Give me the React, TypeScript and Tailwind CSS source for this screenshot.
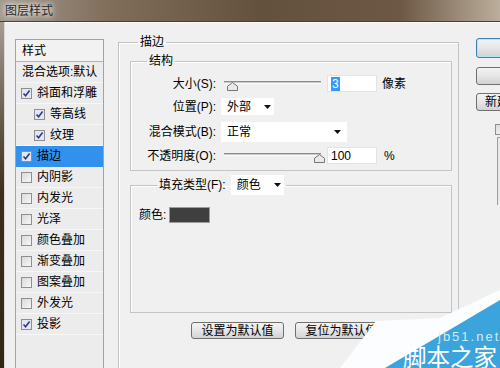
import React from "react";

type Item = { label: string; box?: boolean; on?: boolean; indent?: boolean; sel?: boolean };

const items: Item[] = [
  { label: "混合选项:默认" },
  { label: "斜面和浮雕", box: true, on: true },
  { label: "等高线", box: true, on: true, indent: true },
  { label: "纹理", box: true, on: true, indent: true },
  { label: "描边", box: true, on: true, sel: true },
  { label: "内阴影", box: true },
  { label: "内发光", box: true },
  { label: "光泽", box: true },
  { label: "颜色叠加", box: true },
  { label: "渐变叠加", box: true },
  { label: "图案叠加", box: true },
  { label: "外发光", box: true },
  { label: "投影", box: true, on: true },
];

function Check({ on }: { on?: boolean }) {
  return (
    <span
      className={`flex h-[11px] w-[11px] shrink-0 items-center justify-center border border-[#8e8f8f] ${
        on ? "bg-[#e6e6f2]" : "bg-linear-to-br from-[#dadada] to-[#f7f7f7]"
      }`}
    >
      {on && (
        <svg width="9" height="9" viewBox="0 0 9 9">
          <path d="M1.5 4.5 L3.6 6.8 L7.6 1.6" fill="none" stroke="#2b3990" strokeWidth="1.6" />
        </svg>
      )}
    </span>
  );
}

function Arrow() {
  return (
    <svg width="7" height="4" viewBox="0 0 7 4">
      <path d="M0 0H7L3.5 4Z" fill="#111" />
    </svg>
  );
}

function Select({ text, className }: { text: string; className: string }) {
  return (
    <div className={`flex items-center justify-between bg-white pl-[6px] ${className}`}>
      <span>{text}</span>
      <Arrow />
    </div>
  );
}

function Slider({ thumb }: { thumb: string }) {
  return (
    <div className="relative ml-[8px] h-[17px] w-[97px] shrink-0">
      <div className="absolute left-0 right-0 top-[6px] h-[3px] border-t border-b border-t-[#8c8c8c] border-b-[#fafafa] bg-[#c9c9c9]" />
      <svg className={`absolute top-[7px] ${thumb}`} width="11" height="9" viewBox="0 0 11 9">
        <path d="M0.5 8.5V4.2L5.5 0.6L10.5 4.2V8.5Z" fill="#e9e9e9" stroke="#777" />
      </svg>
    </div>
  );
}

function Input({ children }: { children: React.ReactNode }) {
  return (
    <div className="ml-[6px] flex h-[17px] w-[50px] shrink-0 items-center border border-[#e3e3e3] bg-white pl-[3px]">
      {children}
    </div>
  );
}

function Label({ children }: { children: React.ReactNode }) {
  return <span className="w-[85px] shrink-0 text-right">{children}</span>;
}

function Btn({ children, className }: { children: React.ReactNode; className: string }) {
  return (
    <div
      className={`flex items-center whitespace-nowrap rounded-[3px] border bg-linear-to-b from-[#f3f3f3] via-[#e6e6e6] to-[#d2d2d2] text-[12px] ${className}`}
    >
      {children}
    </div>
  );
}

export default function App() {
  return (
    <div className="relative h-[368px] w-[500px] overflow-hidden font-['Liberation_Sans','Noto_Sans_CJK_SC',sans-serif] text-[12px] leading-none text-black">
      <div className="h-[22px] border-b border-[#4d3d2c] bg-[linear-gradient(90deg,#a39a90_0%,#806d5a_22%,#63503d_52%,#6c5845_80%,#bcae9c_100%)] pl-[5px] pt-[5px] text-[12px] text-[#2a2a2a] [text-shadow:0_0_5px_#fff,0_0_8px_#fff]">
        图层样式
      </div>

      <div className="flex h-[346px]">
        <div className="w-[5px] shrink-0 border-r border-[#d9d9d9] bg-linear-to-b from-[#a69c90] via-[#3d2d1c] to-[#342616]" />

        <div className="flex flex-1 items-start border-t border-[#fbfbfb] bg-[#f0f0f0] pl-[10px] pt-[12px]">
          <div className="mt-[4px] flex h-[340px] w-[89px] shrink-0 flex-col border border-[#a3a3a3] bg-[#ececec]">
            <div className="flex h-[22px] shrink-0 items-center border-b border-[#b2b2b2] bg-[#f2f2f2] pl-[6px]">样式</div>
            {items.map((it) => (
              <div
                key={it.label}
                className={`flex h-[21px] shrink-0 items-center gap-[5px] border-b ${
                  it.sel ? "border-[#3191ec] bg-[#3191ec]" : "border-[#f7f7f7]"
                } ${it.indent ? "pl-[18px]" : it.box ? "pl-[5px]" : "pl-[6px]"}`}
              >
                {it.box && <Check on={it.on} />}
                <span>{it.label}</span>
              </div>
            ))}
          </div>

          <fieldset className="ml-[14px] w-[341px] shrink-0 border border-[#c4c4c4] pb-[40px] shadow-[inset_1px_1px_0_#fff]">
            <legend className="ml-[19px] px-[2px] leading-[14px]">描边</legend>
            <div className="pl-[11px] pr-[6px]">
              <fieldset className="mt-[5px] border border-[#c4c4c4] shadow-[inset_1px_1px_0_#fff]">
                <legend className="ml-[16px] px-[2px] leading-[14px]">结构</legend>
                <div className="flex flex-col pb-[6px] pt-[7px]">
                  <div className="flex h-[17px] items-center">
                    <Label>大小(S):</Label>
                    <Slider thumb="left-[3px]" />
                    <Input>
                      <span className="bg-[#3399ff] px-[1px] py-[1px] text-white">3</span>
                    </Input>
                    <span className="ml-[5px]">像素</span>
                  </div>
                  <div className="mt-[6px] flex h-[17px] items-center">
                    <Label>位置(P):</Label>
                    <Select text="外部" className="ml-[5px] h-[17px] w-[53px] pr-[3px]" />
                  </div>
                  <div className="mt-[7px] flex h-[20px] items-center">
                    <Label>混合模式(B):</Label>
                    <Select text="正常" className="ml-[5px] h-[20px] w-[126px] pr-[6px]" />
                  </div>
                  <div className="mt-[5px] flex h-[17px] items-center">
                    <Label>不透明度(O):</Label>
                    <Slider thumb="left-[90px]" />
                    <Input>100</Input>
                    <span className="ml-[7px]">%</span>
                  </div>
                </div>
              </fieldset>

              <fieldset className="mt-[4px] border border-[#c4c4c4] shadow-[inset_1px_1px_0_#fff]">
                <legend className="ml-[26px] px-[2px]">
                  <div className="flex h-[20px] items-center">
                    <span>填充类型(F):</span>
                    <Select text="颜色" className="ml-[5px] h-[20px] w-[53px] pr-[3px]" />
                  </div>
                </legend>
                <div className="h-[117px] pl-[8px] pt-[12px]">
                  <div className="flex h-[16px] items-center">
                    <span>颜色:</span>
                    <span className="ml-[3px] h-[16px] w-[41px] border border-[#9c9c9c] bg-[#403f40]" />
                  </div>
                </div>
              </fieldset>

              <div className="ml-[61px] mt-[9px] flex gap-[11px]">
                <Btn className="h-[17px] w-[93px] justify-center border-[#707070]">设置为默认值</Btn>
                <Btn className="h-[17px] w-[93px] justify-center border-[#707070]">复位为默认值</Btn>
              </div>
            </div>
          </fieldset>

          <div className="ml-[17px] mt-[3px] flex w-[90px] shrink-0 flex-col">
            <Btn className="h-[20px] justify-center border-[#3c7fb1] shadow-[inset_0_0_0_1px_#b5e4f7]">确定</Btn>
            <Btn className="mt-[9px] h-[18px] justify-center border-[#707070]">取消</Btn>
            <Btn className="mt-[8px] h-[18px] justify-start border-[#707070] pl-[8px]">新建样式(W)...</Btn>
            <div className="mt-[12px] flex items-center gap-[4px] pl-[19px]">
              <Check />
              <span>预览(V)</span>
            </div>
            <div className="ml-[21px] mt-[2px] h-[68px] border-l border-t border-[#a0a0a0] bg-[#e8e8e8]" />
          </div>
        </div>
      </div>

      <div className="pointer-events-none absolute inset-0">
        <svg className="absolute left-0 top-0" width="500" height="368" viewBox="0 0 500 368">
          <polygon points="340,368 376,321 440,318 500,290 500,368" fill="#fbfdfe" />
          <polygon points="385,368 500,300 500,368" fill="#3ba4dc" />
        </svg>
        <div className="absolute left-[438px] top-[330px] text-[13px] leading-none tracking-[2px] text-[#cfeaf7]">jb51.net</div>
        <div className="absolute left-[403px] top-[345px] font-['Noto_Sans_CJK_SC',sans-serif] text-[23.5px] leading-none text-white">
          脚本之家
        </div>
      </div>
    </div>
  );
}
